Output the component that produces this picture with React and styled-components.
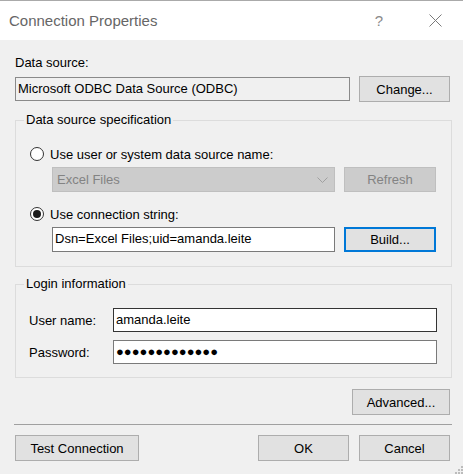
import React from "react";
import styled, { createGlobalStyle } from "styled-components";

const GlobalStyle = createGlobalStyle`
  html, body {
    margin: 0;
    padding: 0;
    background: #f0f0f0;
  }
  body {
    font-family: "Segoe UI", "Liberation Sans", Arial, sans-serif;
    font-size: 13px;
    color: #000;
  }
  * {
    box-sizing: border-box;
  }
`;

const Window = styled.div`
  position: relative;
  width: 463px;
  height: 474px;
  overflow: hidden;
  display: flex;
  flex-direction: column;
  background: #f0f0f0;
  border-top: 1px solid #aaaaaa;
`;

const TitleBar = styled.div`
  height: 39px;
  display: flex;
  align-items: center;
  padding-left: 9px;
  background: #ffffff;
`;

const TitleText = styled.div`
  flex: 1;
  font-size: 15px;
  line-height: 18px;
  color: #666666;
`;

const CaptionButton = styled.div`
  width: 56px;
  height: 39px;
  display: flex;
  align-items: center;
  justify-content: center;
  color: #8a8a8a;
  font-size: 15px;
`;

const Body = styled.div`
  flex: 1;
  display: flex;
  flex-direction: column;
  padding: 14px 11px 0 15px;
`;

const FieldLabel = styled.div`
  height: 18px;
  line-height: 18px;
`;

const Row = styled.div`
  display: flex;
  align-items: center;
  justify-content: space-between;
  height: 26px;
  margin-top: 4px;
  padding-right: 2px;
`;

const TextBox = styled.div`
  width: ${(p) => (p.$width ? `${p.$width}px` : "auto")};
  flex: ${(p) => (p.$width ? "none" : 1)};
  height: 24px;
  line-height: 22px;
  padding: 0 2px;
  white-space: nowrap;
  overflow: hidden;
  background: ${(p) => p.$bg || "#ffffff"};
  border: 1px solid ${(p) => p.$border || "#7a7a7a"};
`;

const Button = styled.button`
  width: ${(p) => p.$width}px;
  height: ${(p) => p.$height || 26}px;
  padding: 0;
  font: inherit;
  color: #000;
  background: #e1e1e1;
  border: ${(p) => (p.$focused ? "2px solid #0078d7" : "1px solid #adadad")};
  &:disabled {
    color: #838383;
    background: #cccccc;
    border-color: #bfbfbf;
  }
`;

const Group = styled.div`
  position: relative;
  margin-top: ${(p) => p.$top}px;
  padding: ${(p) => p.$padding};
  border: 1px solid #dcdcdc;
`;

const GroupCaption = styled.span`
  position: absolute;
  top: -10px;
  left: 8px;
  padding: 0 2px;
  line-height: 18px;
  background: #f0f0f0;
`;

const RadioRow = styled.div`
  display: flex;
  align-items: center;
  gap: 6px;
  height: 18px;
  margin-top: ${(p) => p.$top || 0}px;
`;

const RadioCircle = styled.span`
  width: 14px;
  height: 14px;
  border-radius: 50%;
  border: 1px solid #333333;
  background: #ffffff;
  display: flex;
  align-items: center;
  justify-content: center;
  &::after {
    content: "";
    display: ${(p) => (p.$checked ? "block" : "none")};
    width: 8px;
    height: 8px;
    border-radius: 50%;
    background: #1a1a1a;
  }
`;

const SubRow = styled.div`
  display: flex;
  align-items: center;
  gap: 9px;
  height: 25px;
  margin: 4px 0 0 22px;
`;

const Combo = styled.div`
  width: 283px;
  height: 25px;
  display: flex;
  align-items: center;
  justify-content: space-between;
  padding: 0 6px 0 4px;
  color: #838383;
  background: #cccccc;
  border: 1px solid #bfbfbf;
`;

const LoginRow = styled.div`
  display: flex;
  align-items: center;
  height: 24px;
  margin-top: ${(p) => p.$top || 0}px;
`;

const LoginLabel = styled.div`
  width: 84px;
`;

const Dots = styled.span`
  font-family: "Liberation Sans", "DejaVu Sans", sans-serif;
  font-size: 13px;
  letter-spacing: 0;
`;

const Separator = styled.div`
  height: 1px;
  margin: 9px 0 0 -1px;
  background: #a0a0a0;
`;

const ButtonRow = styled.div`
  display: flex;
  align-items: center;
  gap: 10px;
  margin-top: 10px;
  padding-right: 2px;
`;

const Spacer = styled.div`
  flex: 1;
`;

const Grip = styled.svg`
  position: absolute;
  right: 0;
  bottom: 0;
`;

const Chevron = () => (
  <svg width="11" height="6" viewBox="0 0 11 6">
    <polyline points="0.5,0.5 5.5,5.5 10.5,0.5" fill="none" stroke="#a0a0a0" strokeWidth="1" />
  </svg>
);

const CloseIcon = () => (
  <svg width="13" height="13" viewBox="0 0 13 13">
    <path d="M0.5 0.5 L12.5 12.5 M12.5 0.5 L0.5 12.5" stroke="#7a7a7a" strokeWidth="1" />
  </svg>
);

const App = () => {
  return (
    <>
      <GlobalStyle />
      <Window>
        <TitleBar>
          <TitleText>Connection Properties</TitleText>
          <CaptionButton>?</CaptionButton>
          <CaptionButton>
            <CloseIcon />
          </CaptionButton>
        </TitleBar>
        <Body>
          <FieldLabel>Data source:</FieldLabel>
          <Row>
            <TextBox $width={335} $bg="#f0f0f0" $border="#8a8a8a">
              Microsoft ODBC Data Source (ODBC)
            </TextBox>
            <Button $width={91}>Change...</Button>
          </Row>

          <Group $top={18} $padding="24px 15px 14px 14px">
            <GroupCaption>Data source specification</GroupCaption>
            <RadioRow>
              <RadioCircle />
              Use user or system data source name:
            </RadioRow>
            <SubRow>
              <Combo>
                Excel Files
                <Chevron />
              </Combo>
              <Button $width={92} $height={25} disabled>
                Refresh
              </Button>
            </SubRow>
            <RadioRow $top={13}>
              <RadioCircle $checked />
              Use connection string:
            </RadioRow>
            <SubRow>
              <TextBox $width={283} style={{ height: 25 }}>
                Dsn=Excel Files;uid=amanda.leite
              </TextBox>
              <Button $width={92} $height={25} $focused>
                Build...
              </Button>
            </SubRow>
          </Group>

          <Group $top={17} $padding="23px 14px 13px 13px">
            <GroupCaption>Login information</GroupCaption>
            <LoginRow>
              <LoginLabel>User name:</LoginLabel>
              <TextBox $border="#333333">amanda.leite</TextBox>
            </LoginRow>
            <LoginRow $top={8}>
              <LoginLabel>Password:</LoginLabel>
              <TextBox>
                <Dots>●●●●●●●●●●●●●</Dots>
              </TextBox>
            </LoginRow>
          </Group>

          <Button $width={98} style={{ marginTop: 11, marginRight: 2, alignSelf: "flex-end" }}>
            Advanced...
          </Button>
          <Separator />
          <ButtonRow>
            <Button $width={124}>Test Connection</Button>
            <Spacer />
            <Button $width={91}>OK</Button>
            <Button $width={91}>Cancel</Button>
          </ButtonRow>
        </Body>
        <Grip width="9" height="9" viewBox="0 0 9 9">
          <rect x="7" y="1" width="2" height="2" fill="#bcbcbc" />
          <rect x="4" y="4" width="2" height="2" fill="#bcbcbc" />
          <rect x="7" y="4" width="2" height="2" fill="#bcbcbc" />
          <rect x="1" y="7" width="2" height="2" fill="#bcbcbc" />
          <rect x="4" y="7" width="2" height="2" fill="#bcbcbc" />
          <rect x="7" y="7" width="2" height="2" fill="#bcbcbc" />
        </Grip>
      </Window>
    </>
  );
};

export default App;
